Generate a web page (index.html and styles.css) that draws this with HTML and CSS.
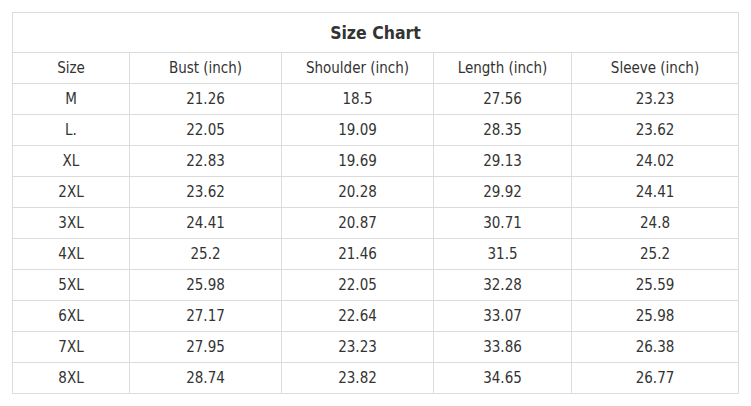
FILE: index.html
```html
<!DOCTYPE html>
<html>
<head>
<meta charset="utf-8">
<link rel="stylesheet" href="styles.css">
</head>
<body>
<div class="wrap">
<table class="chart">
  <colgroup>
    <col class="c1"><col class="c2"><col class="c3"><col class="c4"><col class="c5">
  </colgroup>
  <thead>
    <tr class="title-row"><th colspan="5">Size Chart</th></tr>
    <tr><td>Size</td><td>Bust (inch)</td><td>Shoulder (inch)</td><td>Length (inch)</td><td>Sleeve (inch)</td></tr>
  </thead>
  <tbody>
    <tr><td>M</td><td>21.26</td><td>18.5</td><td>27.56</td><td>23.23</td></tr>
    <tr><td>L.</td><td>22.05</td><td>19.09</td><td>28.35</td><td>23.62</td></tr>
    <tr><td>XL</td><td>22.83</td><td>19.69</td><td>29.13</td><td>24.02</td></tr>
    <tr><td>2XL</td><td>23.62</td><td>20.28</td><td>29.92</td><td>24.41</td></tr>
    <tr><td>3XL</td><td>24.41</td><td>20.87</td><td>30.71</td><td>24.8</td></tr>
    <tr><td>4XL</td><td>25.2</td><td>21.46</td><td>31.5</td><td>25.2</td></tr>
    <tr><td>5XL</td><td>25.98</td><td>22.05</td><td>32.28</td><td>25.59</td></tr>
    <tr><td>6XL</td><td>27.17</td><td>22.64</td><td>33.07</td><td>25.98</td></tr>
    <tr><td>7XL</td><td>27.95</td><td>23.23</td><td>33.86</td><td>26.38</td></tr>
    <tr><td>8XL</td><td>28.74</td><td>23.82</td><td>34.65</td><td>26.77</td></tr>
  </tbody>
</table>
</div>
</body>
</html>
```
FILE: styles.css
```css
html, body {
  margin: 0;
  padding: 0;
  background: #ffffff;
}
.wrap {
  padding: 12px 0 0 12px;
}
.chart {
  border-collapse: collapse;
  table-layout: fixed;
  width: 727px;
  font-family: "DejaVu Sans Condensed", "DejaVu Sans", sans-serif;
  font-size: 15px;
  color: #333333;
}
.c1 { width: 117px; }
.c2 { width: 152px; }
.c3 { width: 152px; }
.c4 { width: 138px; }
.c5 { width: 167px; }
.chart td, .chart th {
  border: 1px solid #dcdcdc;
  text-align: center;
  vertical-align: middle;
  padding: 0;
  height: 30px;
  line-height: 18px;
}
.title-row th {
  height: 39px;
  font-size: 17.5px;
  font-weight: bold;
  color: #333333;
}
```
